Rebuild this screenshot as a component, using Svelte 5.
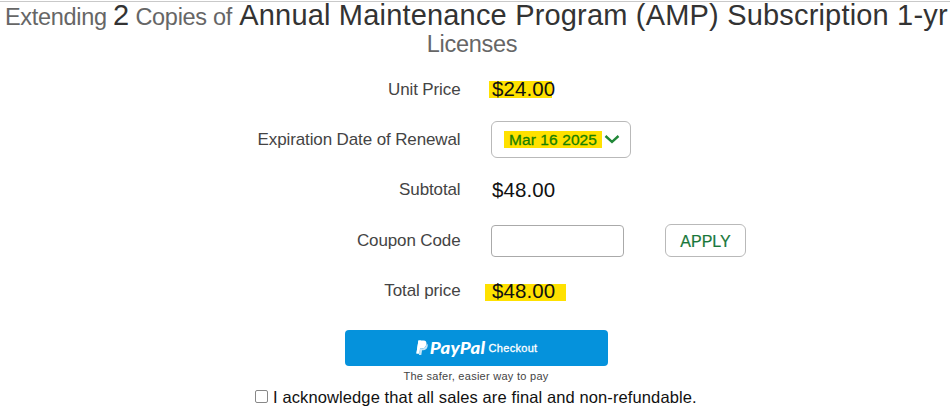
<script>
  const unitPrice = 24
  let copies = $state(2)
  let expiration = $state('Mar 16 2025')
  let coupon = $state('')
  let acknowledged = $state(false)

  let total = $derived(unitPrice * copies)

  function formatPrice(value) {
    return '$' + value.toFixed(2)
  }
</script>

<main class="renewal">
  <h1 class="title">
    <span class="line">Extending <strong>{copies}</strong> Copies of <strong class="product">Annual Maintenance Program (AMP) Subscription 1-yr</strong></span>
    <span class="line second">Licenses</span>
  </h1>

  <div class="form">
    <div class="row">
      <span class="label">Unit Price</span>
      <span class="price marked unit">{formatPrice(unitPrice)}</span>
    </div>
    <div class="row">
      <span class="label">Expiration Date of Renewal</span>
      <button class="date-select">
        <span class="date">{expiration}</span>
        <svg width="16" height="10" viewBox="0 0 16 10">
          <path d="M1.5 1 L8 6.8 L14.5 1" fill="none" stroke="#218838" stroke-width="2.4" />
        </svg>
      </button>
    </div>
    <div class="row">
      <span class="label">Subtotal</span>
      <span class="price">{formatPrice(total)}</span>
    </div>
    <div class="row">
      <label class="label" for="coupon">Coupon Code</label>
      <div class="coupon">
        <input id="coupon" type="text" bind:value={coupon} />
        <button class="apply">APPLY</button>
      </div>
    </div>
    <div class="row">
      <span class="label">Total price</span>
      <span class="price marked total">{formatPrice(total)}</span>
    </div>
  </div>

  <button class="paypal">
    <svg class="mark" width="12" height="16" viewBox="0 0 12 16">
      <path d="M2.4 0.5 H7.5 C10 0.5 10.8 2 10.3 4.5 C9.7 7.4 8 8.6 5.4 8.6 H4 L3.1 13.4 H0.4 Z" fill="#fff" />
      <path d="M4.6 3 L3.2 13.4 H0.4 L2.4 0.5 H5 Z" fill="#fff" />
      <path d="M10.7 3.2 C11.8 4 11.9 5.3 11.6 6.5 C11 9.2 9.4 10.2 7 10.2 H6.1 L5.3 15 H2.9 L4 8.6 H5.4 C8 8.6 10.2 7.2 10.7 3.2 Z" fill="#c5e6f8" />
    </svg>
    <span class="brand">PayPal</span>
    <span class="checkout">Checkout</span>
  </button>
  <p class="tagline">The safer, easier way to pay</p>

  <label class="terms">
    <input type="checkbox" bind:checked={acknowledged} />
    <span>I acknowledge that all sales are final and non-refundable.</span>
  </label>
</main>

<style>
  :global(body) {
    margin: 0;
    background: #fff;
  }

  .renewal {
    box-sizing: border-box;
    width: 950px;
    height: 416px;
    overflow: hidden;
    border-top: 1px solid #fff;
    box-shadow: inset 0 1px #c9c9c9;
    font-family: 'Liberation Sans', Arial, sans-serif;
    color: #111;
  }

  button,
  input {
    box-sizing: border-box;
    margin: 0;
    padding: 0;
    font-family: inherit;
  }

  .title {
    display: flex;
    flex-direction: column;
    margin: 0;
    font-size: 23.5px;
    font-weight: 400;
    letter-spacing: -0.3px;
    color: #666;
  }

  .line {
    height: 28px;
    padding-left: 5px;
    line-height: 28px;
    white-space: nowrap;
  }

  .second {
    padding-left: 0;
    padding-right: 6px;
    line-height: 30px;
    text-align: center;
  }

  .title strong {
    font-size: 29px;
    font-weight: 400;
    letter-spacing: 0;
    color: #333;
  }

  .title .product {
    margin-left: 1px;
    letter-spacing: 0.18px;
  }

  .form {
    display: flex;
    flex-direction: column;
    padding-top: 7px;
  }

  .row {
    display: grid;
    grid-template-columns: 460.5px auto;
    column-gap: 30.5px;
    justify-content: start;
    align-items: center;
    height: 50.4px;
  }

  .label {
    text-align: right;
    font-size: 17px;
    letter-spacing: -0.12px;
    line-height: 21px;
    color: #444;
    white-space: nowrap;
  }

  .price {
    justify-self: start;
    padding-left: 1px;
    font-size: 20.5px;
    letter-spacing: 0.1px;
    line-height: 22px;
  }

  .marked {
    background: linear-gradient(#ffe100, #ffe100) no-repeat;
  }

  .unit {
    margin-left: -2px;
    padding-left: 3px;
    background-size: 63px 17px;
    background-position: 0 3px;
  }

  .total {
    margin-left: -6px;
    padding: 0 11px 0 7px;
    background-size: 82px 17px;
    background-position: 0 4px;
  }

  .date-select {
    display: flex;
    align-items: center;
    gap: 2px;
    width: 140px;
    height: 37px;
    padding-left: 12px;
    border: 1px solid #b9b9b9;
    border-radius: 6px;
    background: #fff;
  }

  .date {
    width: 98px;
    height: 17px;
    background: #ffe100;
    font-size: 15.5px;
    letter-spacing: 0.1px;
    line-height: 18px;
    color: #188000;
    -webkit-text-stroke: 0.3px #188000;
    white-space: nowrap;
  }

  .coupon {
    display: flex;
    align-items: center;
    gap: 41px;
  }

  .coupon input {
    width: 133px;
    height: 32px;
    margin-top: 1px;
    border: 1px solid #aaa;
    border-radius: 4px;
    outline: none;
  }

  .apply {
    width: 81px;
    height: 33px;
    padding-top: 3px;
    border: 1px solid #b9b9b9;
    border-radius: 6px;
    background: #fff;
    font-size: 16px;
    color: #18773a;
    -webkit-text-stroke: 0.2px #18773a;
  }

  .paypal {
    display: flex;
    justify-content: center;
    align-items: center;
    width: 263px;
    height: 36px;
    margin: 14px 0 0 345px;
    border: none;
    border-radius: 4px;
    background: #0592dc;
    color: #fff;
  }

  .brand {
    margin: 0 4px 0 5px;
    font-family: Lato, sans-serif;
    font-size: 16.5px;
    font-style: italic;
    font-weight: 900;
    letter-spacing: 0.2px;
    transform: scaleX(1.13);
  }

  .checkout {
    margin-left: 3px;
    font-size: 11px;
    letter-spacing: 0.3px;
    -webkit-text-stroke: 0.3px #fff;
  }

  .tagline {
    margin: 1px 0 0;
    padding-left: 2px;
    font-size: 11px;
    letter-spacing: 0.27px;
    line-height: 18px;
    text-align: center;
    color: #444;
  }

  .terms {
    display: flex;
    align-items: center;
    gap: 5px;
    margin: 3px 0 0 255px;
    font-size: 16.5px;
    letter-spacing: 0.11px;
    line-height: 18px;
    white-space: nowrap;
  }

  .terms input {
    appearance: none;
    width: 13px;
    height: 13px;
    border: 1px solid #888;
    border-radius: 2px;
    background: #fff;
  }
</style>
